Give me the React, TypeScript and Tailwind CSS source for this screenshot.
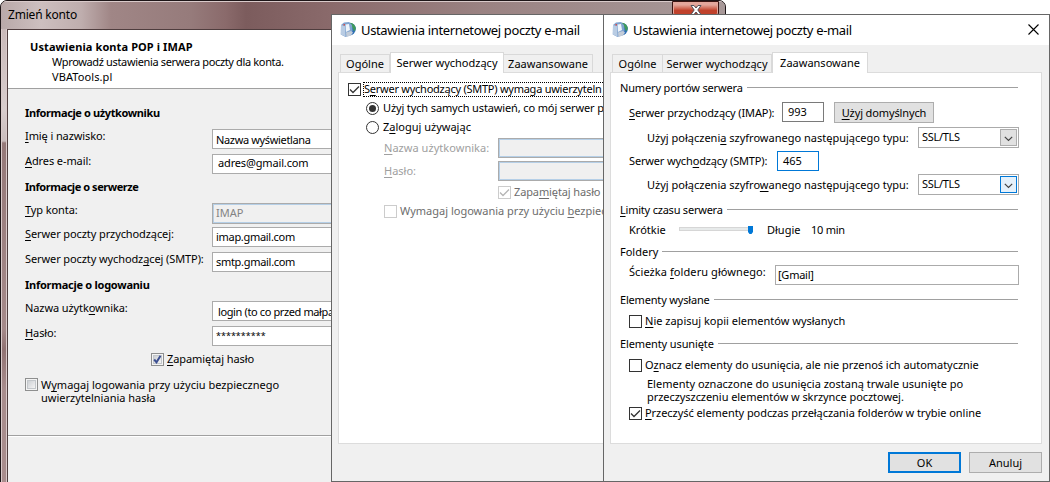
import type { ReactNode } from "react";
import { clsx } from "clsx";

const MailGlobe = () => (
  <svg width="16" height="17" viewBox="0 0 16 17" className="shrink-0">
    <circle cx="9.500" cy="8" r="6.300" fill="#2f6fb5" />
    <path d="M10 1.700c3 .3 5.300 2.300 5.800 5.500-.2 1.500-1 2.500-1.800 3l-1.400-3.500-2.500-2z" fill="#3f9a5b" />
    <path d="M1 4 4 1.500l5-.5 3 3 .5 6-2 4.500-5 1.500L.8 13.500z" fill="#7fa3cf" />
    <path d="m1 4 4 1.200.5 10.300L.8 13.500z" fill="#b9cce3" />
    <path d="m5.500 3.500 3.500-.5 1 6-4 2z" fill="#eef4fa" />
    <path d="m6 11.500 5-1.500 2 1.500-2 3-4.500 1.300z" fill="#c3ccd8" />
    <path d="M3.500 3H5v1.500H3.500z" fill="#d9504c" />
  </svg>
);

// access key
const U = ({ children }: { children: ReactNode }) => (
  <span className="underline decoration-1 underline-offset-2 [text-decoration-skip-ink:none]">{children}</span>
);

const Check = ({ on, disabled }: { on?: boolean; disabled?: boolean }) => (
  <span
    className={clsx(
      "w-[13px] h-[13px] shrink-0 border bg-white flex items-center justify-center",
      disabled ? "border-[#cccccc] text-[#b5b5b5]" : "border-[#333333] text-[#333333]"
    )}
  >
    {on && (
      <svg width="11" height="11" viewBox="0 0 11 11" fill="none" stroke="currentColor" strokeWidth="1.3">
        <path d="m1 5.500 3 3L10 2.500" />
      </svg>
    )}
  </span>
);

const Radio = ({ on }: { on?: boolean }) => (
  <span className="w-[13px] h-[13px] shrink-0 rounded-full border border-[#333333] bg-white flex items-center justify-center">
    {on && <span className="w-[7px] h-[7px] rounded-full bg-[#333333]" />}
  </span>
);

const OldCheck = ({ on }: { on?: boolean }) => (
  <span className="w-[13px] h-[13px] shrink-0 border border-[#8e8f8f] bg-[#f4f4f4] p-px">
    <span className="block w-[9px] h-[9px] border border-[#c3c7cb] bg-gradient-to-br from-[#cdd0d4] to-[#f4f4f4]">
      {on && (
        <svg width="9" height="9" viewBox="0 0 9 9" className="-m-px" fill="none" stroke="#3c4f91" strokeWidth="2">
          <path d="m1.200 4.500 2.300 2.800L7.500.8" />
        </svg>
      )}
    </span>
  </span>
);

const Field = ({ label, value, className, pad, disabled }: {
  label: ReactNode; value: string; className: string; pad: string; disabled?: boolean;
}) => (
  <div className={clsx("flex pl-[17px]", className)}>
    <span className="w-[187px] shrink-0 leading-[14px] tracking-[-0.1px]">{label}</span>
    <span
      className={clsx(
        "flex-1 border border-r-0 leading-[14px] overflow-hidden",
        disabled ? "border-[#ababab] bg-[#f0f0f0] text-[#838383] shadow-[inset_0_0_0_1px_#b5cfe7]" : "border-[#ababab] bg-white",
        pad
      )}
    >
      {value}
    </span>
  </div>
);

const AccountWindow = () => (
  <div className="absolute left-0 top-0 w-[726px] h-[500px] rounded-t-[7px] border border-[#1d1517] bg-[#a89999] flex flex-col overflow-hidden">
    <div className="h-[28px] shrink-0 flex justify-between pl-[7px] pr-[6px] shadow-[inset_0_1px_0_#d9caca] bg-[linear-gradient(90deg,#b9a9a9_0,#cdbfbf_40px,#bfaeae_80px,#a08686_110px,#967b7b_190px,#8a6a6b_225px,#7c5c5d_245px,#8a6a6b_330px,#9a8282_480px,#a89999_726px)]">
      <span className="pt-[6px] text-[12px] leading-[16px] tracking-[-0.2px]">Zmień konto</span>
      <span className="w-[47px] h-[16px] border border-[#3b1512] rounded-b-[4px] bg-gradient-to-b from-[#e3a79c] from-20% to-[#c0412b] to-60% shadow-[inset_0_0_0_1px_#e3a79c] flex justify-center pt-[3px]">
        <svg width="12" height="10" viewBox="0 0 12 10">
          <path d="M1 .5h3l2 2.500 2-2.500h3L7.800 5 11 9.500H8L6 7 4 9.500H1L4.200 5z" fill="#fff" stroke="#52525c" />
        </svg>
      </span>
    </div>
    <div className="flex-1 flex">
      <div className="w-[6px] shrink-0 border-x border-[#d9caca] bg-[linear-gradient(180deg,#c9b9b9_0,#d8cdcd_80px,#c9bcbc_112px,#957979_114px,#a58a8a_300px,#917373_320px,#a88d8d_360px)]" />
      <div className="flex-1 mr-[7px] border border-[#4f3d3e] bg-[#f0f0f0] flex flex-col">
        <div className="h-[59px] shrink-0 bg-white border-b border-[#a0a0a0] pt-[9px] leading-[15px]">
          <div className="pl-[22px] font-bold tracking-[0.1px]">Ustawienia konta POP i IMAP</div>
          <div className="pl-[44px] tracking-[-0.35px]">Wprowadź ustawienia serwera poczty dla konta.</div>
          <div className="pl-[44px] tracking-[0.1px]">VBATools.pl</div>
        </div>
        <h3 className="mt-[17px] pl-[17px] font-bold leading-[14px] tracking-[-0.38px]">Informacje o użytkowniku</h3>
        <Field className="mt-[9px] h-[20px]" label={<><U>I</U>mię i nazwisko:</>} value="Nazwa wyświetlana" pad="pl-[3px] pt-[3px] tracking-[-0.35px]" />
        <Field className="mt-[5px] h-[20px]" label={<><U>A</U>dres e-mail:</>} value="adres@gmail.com" pad="pl-[5px] pt-px tracking-[-0.15px]" />
        <h3 className="mt-[6px] pl-[17px] font-bold leading-[14px] tracking-[-0.45px]">Informacje o serwerze</h3>
        <Field className="mt-[9px] h-[21px]" label={<><U>T</U>yp konta:</>} value="IMAP" pad="pl-[3px] pt-[2px]" disabled />
        <Field className="mt-[3px] h-[20px]" label={<><U>S</U>erwer poczty przychodzącej:</>} value="imap.gmail.com" pad="pl-[3px] pt-[2px] tracking-[-0.3px]" />
        <Field className="mt-[5px] h-[20px]" label={<>Serwer poczty wychodz<U>ą</U>cej (SMTP):</>} value="smtp.gmail.com" pad="pl-[3px] pt-[2px] tracking-[-0.3px]" />
        <h3 className="mt-[6px] pl-[17px] font-bold leading-[14px] tracking-[-0.26px]">Informacje o logowaniu</h3>
        <Field className="mt-[9px] h-[20px] whitespace-nowrap" label={<>Nazwa użytk<U>o</U>wnika:</>} value="login (to co przed małpą" pad="pl-[5px] pt-[3px] tracking-[-0.38px]" />
        <Field className="mt-[5px] h-[20px]" label={<><U>H</U>asło:</>} value="**********" pad="pl-[3px] pt-[2px] text-[9px]" />
        <div className="mt-[5px] ml-[143px] h-[16px] flex items-center gap-[3px]">
          <OldCheck on />
          <span className="tracking-[-0.08px]"><U>Z</U>apamiętaj hasło</span>
        </div>
        <div className="mt-[11px] ml-[17px] flex gap-[3px] leading-[13px]">
          <OldCheck />
          <span>W<U>y</U>magaj logowania przy użyciu bezpiecznego<br />uwierzytelniania hasła</span>
        </div>
        <div className="mt-[31px] h-[2px] border-t border-[#a0a0a0] bg-white" />
      </div>
    </div>
  </div>
);

const tabs = ["Ogólne", "Serwer wychodzący", "Zaawansowane"];

const Dialog = ({ active, tabWidths, className, closable, footer, children }: {
  active: number; tabWidths: string[]; className: string; closable?: boolean; footer?: ReactNode; children: ReactNode;
}) => (
  <div className={clsx("absolute top-[14px] h-[468px] border border-[#666666] bg-[#f0f0f0] flex flex-col overflow-hidden", className)}>
    <div className="h-[30px] shrink-0 bg-white flex items-center pl-[8px] pr-[10px]">
      <span className="-mt-[2px]"><MailGlobe /></span>
      <span className="ml-[5px] flex-1 text-[13px] leading-[16px] tracking-[-0.36px] whitespace-nowrap">Ustawienia internetowej poczty e-mail</span>
      {closable && (
        <svg width="11" height="11" viewBox="0 0 11 11" stroke="#000" strokeWidth="1.1" className="-mt-[2px]">
          <path d="m.5.5 10 10M10.500.5l-10 10" />
        </svg>
      )}
    </div>
    <div className="h-[27px] shrink-0 flex items-end pl-[8px] whitespace-nowrap">
      {tabs.map((tab, i) => (
        <span
          key={tab}
          className={clsx(
            "border border-[#d9d9d9] border-b-0 flex justify-center shrink-0 leading-[14px]",
            tabWidths[i],
            i === active ? "h-[21px] -mb-px bg-white relative pt-[3px]" : "h-[18px] pt-[2px]",
            i > 0 && i !== active && "border-l-0"
          )}
        >
          {tab}
        </span>
      ))}
    </div>
    <div className="ml-[6px] mr-[7px] h-[372px] shrink-0 border border-[#dcdcdc] bg-white flex flex-col">{children}</div>
    {footer}
  </div>
);

const Section = ({ className, title }: { className: string; title: ReactNode }) => (
  <div className={clsx("h-[16px] shrink-0 flex items-center gap-[4px] pl-[9px] pr-[23px]", className)}>
    <span>{title}</span>
    <span className="flex-1 h-px bg-[#a0a0a0] -mt-px" />
  </div>
);

const Select = ({ hot }: { hot?: boolean }) => (
  <span className="ml-auto w-[101px] h-[21px] border border-[#ababab] bg-white flex pl-[3px] pr-px pt-px leading-[16px]">
    <span className="flex-1 tracking-[-0.3px]">SSL/TLS</span>
    <span className={clsx("w-[17px] h-[17px] border flex items-center justify-center", hot ? "border-[#0078d7] bg-[#e5f1fb]" : "border-[#adadad] bg-[#e1e1e1]")}>
      <svg width="9" height="6" viewBox="0 0 9 6" fill="none" stroke="#444" strokeWidth="1.2" className="mt-[2px]">
        <path d="m.8.8 3.700 3.700L8.200.8" />
      </svg>
    </span>
  </span>
);

const OutgoingDialog = () => (
  <Dialog active={1} tabWidths={["w-[50px]", "w-[114px]", "w-[89px]"]} className="left-[331px] w-[447px]">
    <div className="mt-[8px] pl-[9px] h-[16px] flex items-center gap-[2px] whitespace-nowrap">
      <Check on />
      <span className="border border-dotted border-black leading-[12px] h-[15px] pr-[40px] tracking-[-0.25px]">S<U>e</U>rwer wychodzący (SMTP) wymaga uwierzyteln</span>
    </div>
    <div className="mt-[3px] pl-[27px] h-[16px] flex items-center gap-[4px] whitespace-nowrap">
      <Radio on />
      <span className="tracking-[-0.13px]">Użyj tych samych ustawień, co mój serwer p</span>
    </div>
    <div className="mt-[3px] pl-[27px] h-[16px] flex items-center gap-[4px]">
      <Radio />
      <span>Z<U>a</U>loguj używając</span>
    </div>
    <div className="mt-[3px] pl-[45px] h-[20px] flex items-center text-[#a0a0a0]">
      <span className="w-[114px] tracking-[0.04px]"><U>N</U>azwa użytkownika:</span>
      <span className="flex-1 h-[20px] border border-[#ababab] bg-[#f0f0f0] shadow-[inset_0_0_0_1px_#b5cfe7]" />
    </div>
    <div className="mt-[3px] pl-[45px] h-[20px] flex items-center text-[#a0a0a0]">
      <span className="w-[114px]"><U>H</U>asło:</span>
      <span className="flex-1 h-[20px] border border-[#ababab] bg-[#f0f0f0] shadow-[inset_0_0_0_1px_#b5cfe7]" />
    </div>
    <div className="mt-[3px] pl-[159px] h-[16px] flex items-center gap-[3px] text-[#6d6d6d]">
      <Check on disabled />
      <span className="tracking-[-0.12px]">Zapa<U>m</U>iętaj hasło</span>
    </div>
    <div className="mt-[3px] pl-[45px] h-[16px] flex items-center gap-[3px] whitespace-nowrap text-[#6d6d6d]">
      <Check disabled />
      <span>Wymagaj logowania przy użyciu <U>b</U>ezpiec</span>
    </div>
  </Dialog>
);

const AdvancedDialog = () => (
  <Dialog
    active={2}
    tabWidths={["w-[51px]", "w-[109px]", "w-[96px]"]}
    className="left-[603px] w-[447px]"
    closable
    footer={
      <div className="mt-[8px] pr-[7px] flex justify-end gap-[8px]">
        <button className="w-[73px] h-[21px] border-2 border-[#0078d7] bg-[#e1e1e1] leading-[17px]">OK</button>
        <button className="w-[73px] h-[21px] border border-[#adadad] bg-[#e1e1e1] leading-[19px]">Anuluj</button>
      </div>
    }
  >
    <Section className="mt-[7px] tracking-[-0.15px]" title="Numery portów serwera" />
    <div className="mt-[6px] pl-[18px] h-[21px] flex items-center">
      <span className="w-[153px] tracking-[-0.12px]"><U>S</U>erwer przychodzący (IMAP):</span>
      <span className="w-[42px] h-[20px] -mt-px border border-[#7a7a7a] pl-[5px] leading-[18px]">993</span>
      <button className="ml-[10px] w-[100px] h-[21px] border border-[#adadad] bg-[#e1e1e1] tracking-[-0.12px]"><U>U</U>żyj domyślnych</button>
    </div>
    <div className="mt-[4px] pl-[36px] pr-[22px] h-[21px] flex items-center">
      <span>Użyj połączeni<U>a</U> szyfrowanego następującego typu:</span>
      <Select />
    </div>
    <div className="mt-[3px] pl-[18px] h-[20px] flex items-center">
      <span className="w-[148px] tracking-[-0.16px]">Serwer wych<U>o</U>dzący (SMTP):</span>
      <span className="w-[42px] h-[20px] border border-[#0078d7] pl-[5px] leading-[18px]">465</span>
    </div>
    <div className="mt-[3px] pl-[36px] pr-[22px] h-[21px] flex items-center">
      <span>Użyj połączenia szyfro<U>w</U>anego następującego typu:</span>
      <Select hot />
    </div>
    <Section className="mt-[7px] tracking-[-0.22px]" title={<><U>L</U>imity czasu serwera</>} />
    <div className="mt-[4px] pl-[18px] h-[16px] flex items-center">
      <span className="w-[50px]">Krótkie</span>
      <span className="w-[69px] h-[4px] -mt-[2px] border border-r-0 border-[#d6d6d6] bg-[#e7eaea]" />
      <svg width="5" height="8" viewBox="0 0 5 8"><path d="M0 0h5v6L3.500 8h-2L0 6z" fill="#0078d7" /></svg>
      <span className="ml-[14px] w-[44px]">Długie</span>
      <span className="tracking-[-0.25px]">10 min</span>
    </div>
    <Section className="mt-[6px]" title="Foldery" />
    <div className="mt-[5px] pl-[18px] pr-[22px] h-[20px] flex">
      <span className="w-[146px] leading-[14px] tracking-[0.08px]">Ścieżka <U>f</U>olderu głównego:</span>
      <span className="flex-1 border border-[#ababab] pl-[2px] leading-[18px] tracking-[-0.25px]">[Gmail]</span>
    </div>
    <Section className="mt-[7px] tracking-[-0.18px]" title="Elementy wysłane" />
    <div className="mt-[5px] pl-[18px] h-[16px] flex items-center gap-[3px]">
      <Check />
      <span><U>N</U>ie zapisuj kopii elementów wysłanych</span>
    </div>
    <Section className="mt-[7px] tracking-[-0.12px]" title="Elementy usunięte" />
    <div className="mt-[5px] pl-[18px] h-[16px] flex items-center gap-[3px]">
      <Check />
      <span className="tracking-[-0.05px]">O<U>z</U>nacz elementy do usunięcia, ale nie przenoś ich automatycznie</span>
    </div>
    <p className="mt-[4px] pl-[36px] leading-[13px]">
      Elementy oznaczone do usunięcia zostaną trwale usunięte po<br />
      <span className="tracking-[-0.06px]">przeczyszczeniu elementów w skrzynce pocztowej.</span>
    </p>
    <div className="mt-[2px] pl-[18px] h-[16px] flex items-center gap-[3px]">
      <Check on />
      <span className="tracking-[-0.06px]"><U>P</U>rzeczyść elementy podczas przełączania folderów w trybie online</span>
    </div>
  </Dialog>
);

export default function App() {
  return (
    <div className="relative w-[1050px] h-[482px] overflow-hidden bg-white text-black text-[11px] leading-[14px] font-['Noto_Sans',sans-serif]">
      <AccountWindow />
      <OutgoingDialog />
      <AdvancedDialog />
    </div>
  );
}
